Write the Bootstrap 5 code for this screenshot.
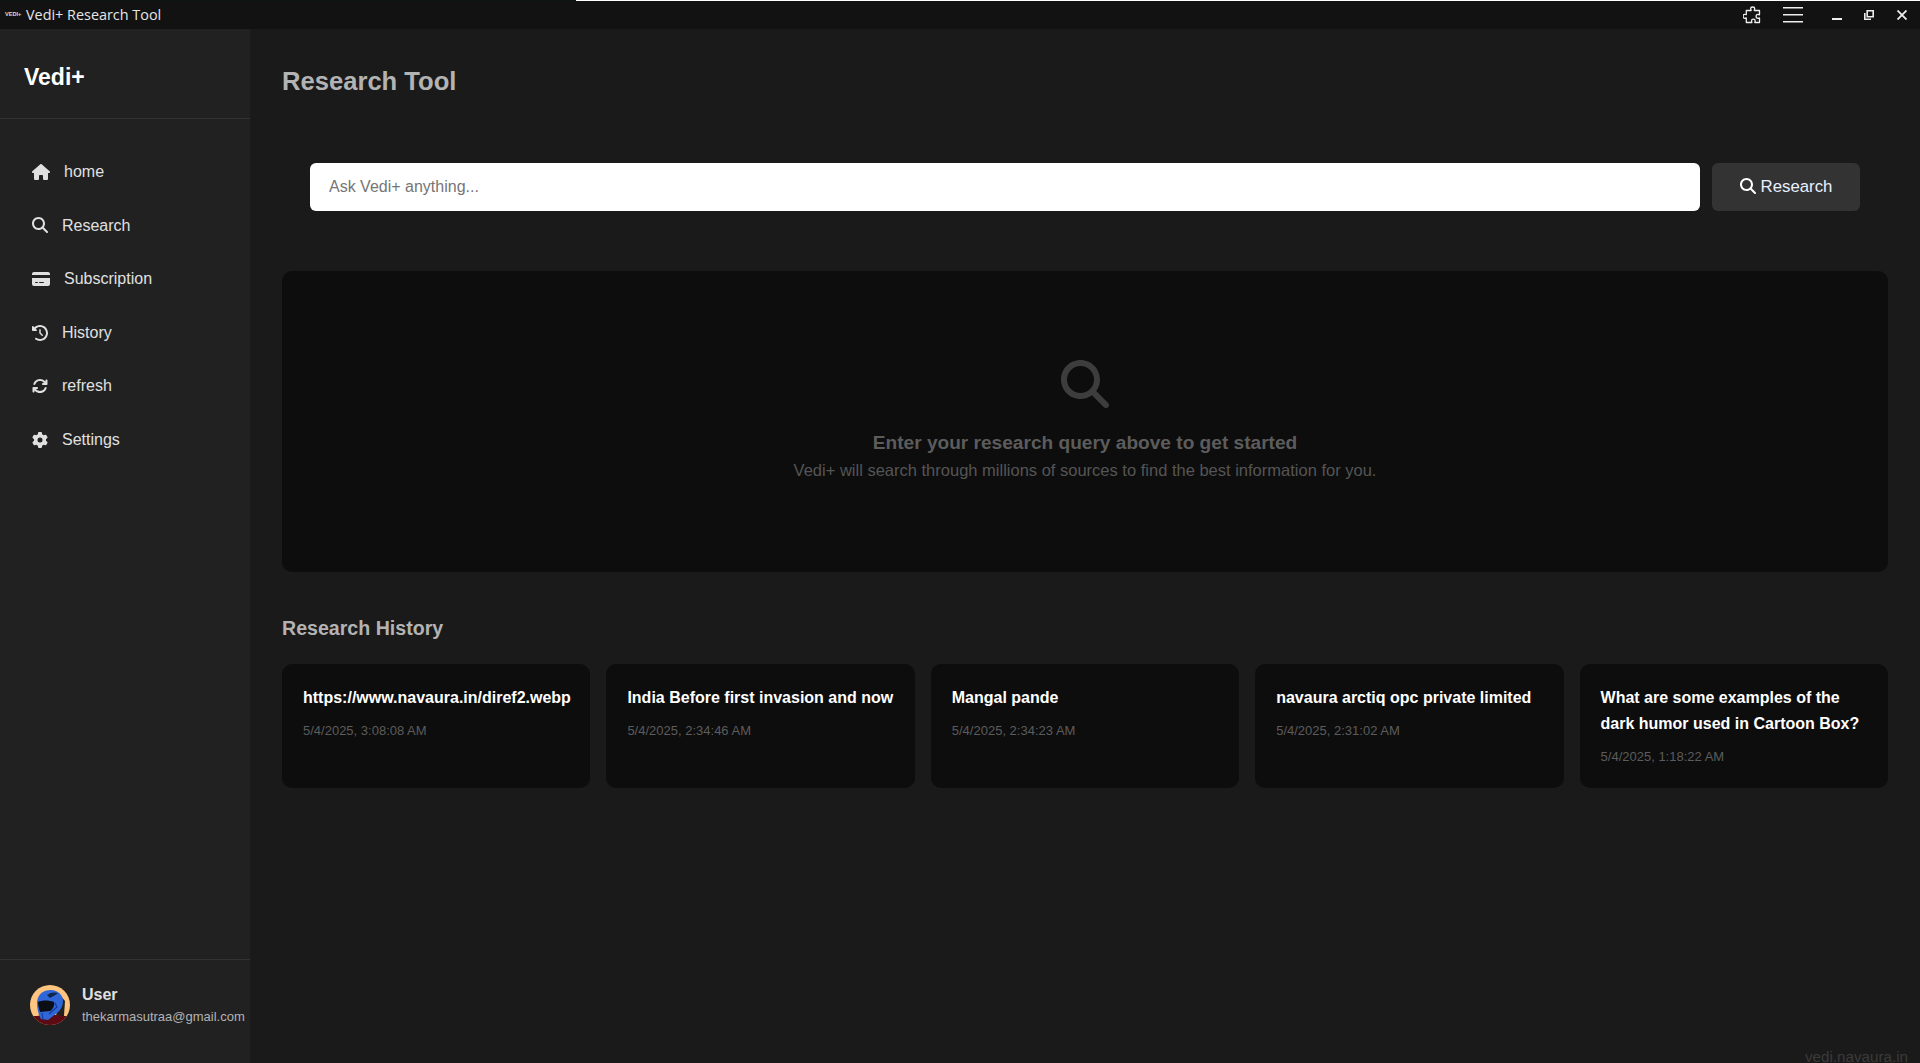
<!DOCTYPE html>
<html lang="en">
<head>
<meta charset="utf-8">
<title>Vedi+ Research Tool</title>
<link href="https://cdn.jsdelivr.net/npm/bootstrap@5.3.0/dist/css/bootstrap.min.css" rel="stylesheet">
<style>
html,body{height:100%;overflow:hidden}
body{background:#1a1a1a;font-family:"Liberation Sans",Arial,sans-serif;color:#e0e0e0;line-height:1.6;position:relative}
.app-frame{height:1063px}
.top-strip{height:1px;background:linear-gradient(90deg,#0a1512 0,#0a1512 576px,#fff 576px,#fff 100%)}
.title-bar{height:28px;background:#121212;color:#e6e6e6;font-family:"Open Sans","Noto Sans",sans-serif;font-size:14.4px;line-height:28px}
.fav-mark{width:26px;font-size:5.6px;font-weight:700;line-height:1;padding-left:5px;color:#ddd;font-family:"Liberation Sans",sans-serif}
.win-tools{padding-right:13px}
.win-tools svg{display:block;color:#eee}
.tool-puzzle{margin-right:20px}
.side-rail{width:250px;background:#212121;flex:none}
.rail-head{height:90px;padding:7px 24px 0;border-bottom:1px solid #333}
.rail-logo{font-size:23px;font-weight:700;color:#fff;line-height:1}
.rail-menu{padding:26px 0 0 0;list-style:none;margin:0}
.rail-menu li{height:53.6px;padding-left:32px;font-size:16px;color:#e0e0e0}
.rail-menu svg{fill:#e0e0e0;display:block;flex:none}
.rail-menu span{margin-left:14px}
.rail-foot{height:104px;border-top:1px solid #333;padding:0 0 14px 30px;margin-top:auto}
.user-name{font-size:16px;font-weight:700;line-height:24px;color:#e0e0e0}
.user-mail{font-size:13px;line-height:20px;color:#b3b3b3;white-space:nowrap}
.user-text{margin-left:12px}
.avatar-pic{width:40px;height:40px;display:block;border-radius:50%;flex:none}
.main-pane{padding:0 32px;min-width:0}
.page-title{font-size:25.6px;font-weight:700;color:#b3b3b3;margin:0;line-height:42px;padding-top:31px}
.query-bar{margin:61px 28px 0;gap:12px}
.query-input{height:48px;border:0;border-radius:6px;background:#fff;padding:0 19px;font-size:16px;color:#333}
.query-input::placeholder{color:#757575;opacity:1}
.query-btn{height:48px;width:148px;flex:none;border:0;border-radius:6px;background:#333;color:#e8f0ff;font-size:16.8px;padding:0}
.query-btn svg{fill:#fff;vertical-align:-2px;margin-right:5px}
.empty-panel{height:301px;margin-top:60px;background:#0d0d0d;border-radius:10px;padding-top:89px}
.empty-panel svg{fill:#3d3d3d;display:block;margin:0 auto 20px}
.empty-title{font-size:19.1px;font-weight:700;color:#5c5c5c;line-height:30px;margin:0 0 -1px}
.empty-sub{font-size:16.5px;color:#555;line-height:26px;margin:0}
.hist-title{font-size:19.6px;font-weight:700;color:#b3b3b3;margin:40px 0 0;line-height:32px}
.hist-row{margin-top:4px}
.hist-card{height:124px;background:#0d0d0d;border-radius:10px;padding:21px;overflow:hidden}
.hist-name{font-size:16px;font-weight:700;color:#fff;line-height:26px;margin:0;white-space:normal}
.hist-when{font-size:13px;color:#5c5c5c;line-height:20px;margin-top:10px}
.site-mark{position:absolute;right:12px;bottom:-4px;font-size:15.2px;color:#3a3a3a;line-height:20px}
</style>
</head>
<body>
<div class="app-frame d-flex flex-column">
  <div class="top-strip"></div>
  <div class="title-bar d-flex align-items-center">
    <div class="fav-mark">VEDI+</div>
    <div class="flex-grow-1">Vedi+ Research Tool</div>
    <div class="win-tools d-flex align-items-center">
      <svg class="tool-puzzle" width="20" height="20" viewBox="0 0 20 20" fill="none" stroke="currentColor" stroke-width="1.300" stroke-linejoin="round"><path d="M7.700 3.800c0-2.400 4-2.400 4 0 0 .8-.4 1.200-.4 1.700h5.200v4.300c-.5 0-.9-.4-1.600-.4-2.400 0-2.400 3.900 0 3.900.7 0 1.100-.4 1.600-.4v4.600h-4.700c0-.5.4-1 .4-1.600 0-2.300-3.700-2.300-3.700 0 0 .6.400 1.100.4 1.600H3.300v-4.600c-.5 0-.9.400-1.500.400-2.300 0-2.300-4 0-4 .6 0 1 .4 1.500.400V5.500h4.800c0-.5-.4-.9-.4-1.700z"/></svg>
      <svg width="20" height="16" viewBox="0 0 20 16" fill="currentColor"><rect y="0" width="20" height="1.500"/><rect y="7" width="20" height="1.500"/><rect y="14" width="20" height="1.500"/></svg>
      <svg style="margin-left:29px" width="10" height="10" viewBox="0 0 10 10" fill="currentColor"><rect y="8" width="10" height="2"/></svg>
      <svg style="margin-left:22px" width="10" height="10" viewBox="0 0 10 10" fill="none" stroke="currentColor" stroke-width="1.600"><path d="M3.200.8h6v6h-6z"/><path d="M.8 3v6.200H7"/></svg>
      <svg style="margin-left:23px" width="10" height="10" viewBox="0 0 10 10" fill="none" stroke="currentColor" stroke-width="1.800"><path d="M.5.500l9 9M9.500.500l-9 9"/></svg>
    </div>
  </div>
  <div class="d-flex flex-grow-1" style="min-height:0">
    <aside class="side-rail d-flex flex-column">
      <div class="rail-head d-flex align-items-center"><span class="rail-logo">Vedi+</span></div>
      <ul class="rail-menu">
        <li class="d-flex align-items-center"><svg width="18" height="16" viewBox="0 0 576 512"><path d="M575.800 255.500c0 18-15 32.100-32 32.100h-32l.7 160.200c0 2.700-.2 5.400-.5 8.100V472c0 22.100-17.900 40-40 40H456c-1.100 0-2.200 0-3.300-.1c-1.400 .1-2.800 .1-4.200 .1H416 392c-22.100 0-40-17.900-40-40V448 384c0-17.700-14.300-32-32-32H256c-17.700 0-32 14.300-32 32v64 24c0 22.100-17.900 40-40 40H160 128.100c-1.500 0-3-.1-4.500-.2c-1.200 .1-2.400 .2-3.600 .2H104c-22.100 0-40-17.900-40-40V360c0-.9 0-1.900 .1-2.800V287.600H32c-18 0-32-14-32-32.100c0-9 3-17 10-24L266.400 8c7-7 15-8 22-8s15 2 21 7L564.800 231.500c8 7 12 15 11 24z"/></svg><span>home</span></li>
        <li class="d-flex align-items-center"><svg width="16" height="16" viewBox="0 0 512 512"><path d="M416 208c0 45.900-14.900 88.300-40 122.700L502.600 457.400c12.500 12.500 12.500 32.800 0 45.300s-32.800 12.500-45.300 0L330.700 376c-34.400 25.200-76.800 40-122.700 40C93.100 416 0 322.900 0 208S93.100 0 208 0S416 93.100 416 208zM208 352a144 144 0 1 0 0-288 144 144 0 1 0 0 288z"/></svg><span>Research</span></li>
        <li class="d-flex align-items-center"><svg width="18" height="16" viewBox="0 0 576 512"><path d="M64 32C28.700 32 0 60.700 0 96v32H576V96c0-35.300-28.700-64-64-64H64zM576 224H0V416c0 35.300 28.700 64 64 64H512c35.300 0 64-28.700 64-64V224zM112 352h64c8.800 0 16 7.200 16 16s-7.200 16-16 16H112c-8.800 0-16-7.200-16-16s7.200-16 16-16zm112 16c0-8.800 7.200-16 16-16H368c8.800 0 16 7.200 16 16s-7.200 16-16 16H240c-8.800 0-16-7.200-16-16z"/></svg><span>Subscription</span></li>
        <li class="d-flex align-items-center"><svg width="16" height="16" viewBox="0 0 512 512"><path d="M75 75L41 41C25.900 25.900 0 36.600 0 57.900V168c0 13.300 10.700 24 24 24H134.100c21.400 0 32.100-25.900 17-41l-30.800-30.800C155 85.500 203 64 256 64c106 0 192 86 192 192s-86 192-192 192c-40.800 0-78.600-12.700-109.700-34.400c-14.500-10.100-34.400-6.600-44.600 7.900s-6.600 34.400 7.900 44.600C151.200 495 201.700 512 256 512c141.400 0 256-114.600 256-256S397.400 0 256 0C185.300 0 121.300 28.700 75 75zm181 53c-13.300 0-24 10.700-24 24V256c0 6.400 2.500 12.500 7 17l72 72c9.400 9.400 24.600 9.400 33.900 0s9.400-24.600 0-33.900l-65-65V152c0-13.300-10.700-24-24-24z"/></svg><span>History</span></li>
        <li class="d-flex align-items-center"><svg width="16" height="16" viewBox="0 0 512 512"><path d="M105.100 202.600c7.700-21.800 20.200-42.300 37.800-59.800c62.500-62.500 163.800-62.500 226.300 0L386.300 160H352c-17.700 0-32 14.300-32 32s14.300 32 32 32H463.500c0 0 0 0 0 0h.4c17.700 0 32-14.300 32-32V80c0-17.700-14.300-32-32-32s-32 14.300-32 32v35.200L414.400 97.600c-87.500-87.500-229.300-87.500-316.800 0C73.200 122 55.600 150.700 44.800 181.400c-5.900 16.700 2.900 34.900 19.500 40.800s34.900-2.900 40.800-19.500zM39 289.300c-5 1.500-9.800 4.200-13.700 8.200c-4 4-6.700 8.800-8.100 14c-.3 1.200-.6 2.500-.8 3.800c-.3 1.700-.4 3.400-.4 5.100V432c0 17.700 14.300 32 32 32s32-14.300 32-32V396.900l17.600 17.500 0 0c87.500 87.400 229.300 87.400 316.700 0c24.400-24.400 42.100-53.100 52.900-83.700c5.900-16.700-2.900-34.900-19.500-40.800s-34.900 2.900-40.800 19.500c-7.700 21.800-20.200 42.300-37.800 59.800c-62.500 62.500-163.800 62.500-226.300 0l-.1-.1L125.600 352H160c17.700 0 32-14.300 32-32s-14.300-32-32-32H48.400c-1.600 0-3.200 .1-4.800 .3s-3.100 .5-4.600 1z"/></svg><span>refresh</span></li>
        <li class="d-flex align-items-center"><svg width="16" height="16" viewBox="0 0 512 512"><path d="M495.900 166.600c3.200 8.700 .5 18.400-6.400 24.600l-43.300 39.400c1.100 8.300 1.700 16.800 1.700 25.400s-.6 17.100-1.700 25.400l43.300 39.400c6.900 6.200 9.600 15.900 6.400 24.600c-4.400 11.900-9.700 23.300-15.800 34.300l-4.700 8.100c-6.600 11-14 21.400-22.100 31.200c-5.900 7.200-15.700 9.600-24.500 6.800l-55.700-17.700c-13.400 10.300-28.200 18.900-44 25.400l-12.500 57.100c-2 9.100-9 16.300-18.200 17.800c-13.800 2.300-28 3.500-42.500 3.500s-28.700-1.200-42.500-3.500c-9.200-1.500-16.200-8.700-18.200-17.800l-12.500-57.100c-15.800-6.500-30.600-15.100-44-25.400L83.100 425.900c-8.800 2.800-18.600 .3-24.500-6.800c-8.100-9.800-15.500-20.200-22.100-31.200l-4.700-8.100c-6.100-11-11.400-22.400-15.800-34.300c-3.200-8.700-.5-18.400 6.400-24.600l43.300-39.400C64.600 273.100 64 264.600 64 256s.6-17.100 1.700-25.400L22.400 191.200c-6.900-6.200-9.600-15.900-6.400-24.600c4.400-11.900 9.700-23.300 15.800-34.300l4.700-8.100c6.600-11 14-21.400 22.100-31.200c5.900-7.200 15.700-9.600 24.500-6.800l55.700 17.700c13.400-10.300 28.200-18.900 44-25.400l12.500-57.100c2-9.100 9-16.300 18.200-17.800C227.300 1.200 241.500 0 256 0s28.700 1.200 42.500 3.500c9.200 1.500 16.200 8.700 18.200 17.800l12.500 57.100c15.800 6.500 30.600 15.100 44 25.400l55.700-17.700c8.800-2.800 18.600-.3 24.500 6.800c8.100 9.800 15.500 20.200 22.100 31.200l4.700 8.100c6.100 11 11.400 22.400 15.800 34.300zM256 336a80 80 0 1 0 0-160 80 80 0 1 0 0 160z"/></svg><span>Settings</span></li>
      </ul>
      <div class="rail-foot d-flex align-items-center">
        <svg class="avatar-pic" viewBox="0 0 40 40"><rect width="40" height="40" fill="#fdc57f"/><path d="M30 10l5 6-1 15h-8z" fill="#23211f"/><path d="M0 31h7l5-1h16l5 1h7v9H0z" fill="#5c0a14"/><path d="M7 17C8 9 13 5 21 5c7 0 12 5 12 11 0 5-2 9-6 12l-9 7-7-1c-3-5-4-11-4-17z" fill="#2f66d8"/><path d="M8 17c4-2 11-2 16 0 1 3-1 7-4 9l-10 1c-1-3-2-7-2-10z" fill="#0b0e14"/><path d="M17 10c4-3 7-3 11-2-2 2-5 3-8 5z" fill="#12264a"/><path d="M12 28l1 7M25 18l2 4-8 7" stroke="#123a9a" stroke-width="1.100" fill="none"/></svg>
        <div class="user-text"><div class="user-name">User</div><div class="user-mail">thekarmasutraa@gmail.com</div></div>
      </div>
    </aside>
    <main class="main-pane flex-grow-1">
      <h1 class="page-title">Research Tool</h1>
      <div class="query-bar d-flex">
        <input class="query-input flex-grow-1" type="text" placeholder="Ask Vedi+ anything...">
        <button class="query-btn" type="button"><svg width="16" height="16" viewBox="0 0 512 512"><path d="M416 208c0 45.900-14.900 88.300-40 122.700L502.600 457.400c12.500 12.500 12.500 32.800 0 45.300s-32.800 12.500-45.300 0L330.700 376c-34.400 25.200-76.800 40-122.700 40C93.100 416 0 322.900 0 208S93.100 0 208 0S416 93.100 416 208zM208 352a144 144 0 1 0 0-288 144 144 0 1 0 0 288z"/></svg>Research</button>
      </div>
      <section class="empty-panel text-center">
        <svg width="48" height="48" viewBox="0 0 512 512"><path d="M416 208c0 45.900-14.900 88.300-40 122.700L502.600 457.400c12.500 12.500 12.500 32.800 0 45.300s-32.800 12.500-45.300 0L330.700 376c-34.400 25.200-76.800 40-122.700 40C93.100 416 0 322.900 0 208S93.100 0 208 0S416 93.100 416 208zM208 352a144 144 0 1 0 0-288 144 144 0 1 0 0 288z"/></svg>
        <p class="empty-title">Enter your research query above to get started</p>
        <p class="empty-sub">Vedi+ will search through millions of sources to find the best information for you.</p>
      </section>
      <h2 class="hist-title">Research History</h2>
      <div class="row row-cols-5 g-3 hist-row">
        <div class="col"><div class="hist-card"><p class="hist-name">https://www.navaura.in/diref2.webp</p><div class="hist-when">5/4/2025, 3:08:08 AM</div></div></div>
        <div class="col"><div class="hist-card"><p class="hist-name">India Before first invasion and now</p><div class="hist-when">5/4/2025, 2:34:46 AM</div></div></div>
        <div class="col"><div class="hist-card"><p class="hist-name">Mangal pande</p><div class="hist-when">5/4/2025, 2:34:23 AM</div></div></div>
        <div class="col"><div class="hist-card"><p class="hist-name">navaura arctiq opc private limited</p><div class="hist-when">5/4/2025, 2:31:02 AM</div></div></div>
        <div class="col"><div class="hist-card"><p class="hist-name">What are some examples of the dark humor used in Cartoon Box?</p><div class="hist-when">5/4/2025, 1:18:22 AM</div></div></div>
      </div>
    </main>
  </div>
</div>
<div class="site-mark">vedi.navaura.in</div>
<script src="https://cdn.jsdelivr.net/npm/bootstrap@5.3.0/dist/js/bootstrap.bundle.min.js"></script>
</body>
</html>
